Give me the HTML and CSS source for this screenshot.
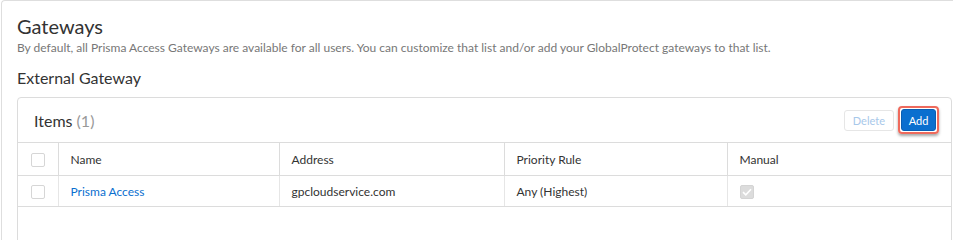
FILE: index.html
```html
<!DOCTYPE html>
<html>
<head>
<meta charset="utf-8">
<link rel="stylesheet" href="styles.css">
</head>
<body>
<div class="page">
  <h1 class="title">Gateways</h1>
  <p class="desc">By default, all Prisma Access Gateways are available for all users. You can customize that list and/or add your GlobalProtect gateways to that list.</p>
  <h2 class="section">External Gateway</h2>
  <div class="card">
    <div class="card-head">
      <div class="items">Items <span class="count">(1)</span></div>
      <div class="actions">
        <button class="btn btn-delete">Delete</button>
        <span class="highlight"><button class="btn btn-add">Add</button></span>
      </div>
    </div>
    <table class="grid">
      <colgroup>
        <col class="c-check">
        <col class="c-name">
        <col class="c-addr">
        <col class="c-prio">
        <col>
      </colgroup>
      <thead>
        <tr>
          <th class="chk"><span class="box"></span></th>
          <th>Name</th>
          <th>Address</th>
          <th>Priority Rule</th>
          <th>Manual</th>
        </tr>
      </thead>
      <tbody>
        <tr>
          <td class="chk"><span class="box"></span></td>
          <td><a class="link">Prisma Access</a></td>
          <td>gpcloudservice.com</td>
          <td>Any (Highest)</td>
          <td><span class="box checked"><svg width="10" height="8" viewBox="0 0 10 8"><path d="M1 4.2 L3.8 6.8 L9 1.2" fill="none" stroke="#fff" stroke-width="1.6"/></svg></span></td>
        </tr>
      </tbody>
    </table>
  </div>
</div>
</body>
</html>
```

FILE: styles.css
```css
html, body {
  margin: 0;
  padding: 0;
  background: #fff;
  overflow: hidden;
}
body {
  font-family: Lato, "Open Sans", sans-serif;
  color: #333;
}
.page {
  margin-left: 1px;
  border: 1px solid #dedede;
  border-right: none;
  border-bottom: none;
  border-radius: 4px 0 0 0;
  padding: 12px 0 0 15px;
  height: 227px;
}
.title {
  margin: 0;
  font-size: 20px;
  font-weight: 400;
  line-height: 26px;
  color: #333;
}
.desc {
  margin: 1px 0 0;
  font-size: 12px;
  line-height: 16px;
  color: #777;
}
.section {
  margin: 12px 0 0;
  font-size: 16px;
  font-weight: 400;
  line-height: 20px;
  color: #333;
}
.card {
  margin-top: 9px;
  border: 1px solid #dcdcdc;
  border-radius: 4px;
  height: 200px;
  width: 933px;
}
.card-head {
  height: 44px;
  display: flex;
  align-items: center;
  justify-content: space-between;
  padding: 0 12px 0 16px;
  border-bottom: 1px solid #dcdcdc;
}
.items {
  font-size: 16px;
  color: #333;
}
.count {
  color: #999;
}
.actions {
  display: flex;
  align-items: center;
  gap: 4px;
}
.btn {
  font-family: Lato, sans-serif;
  font-size: 11px;
  height: 21px;
  border-radius: 3px;
  padding: 0 8px;
  cursor: default;
}
.btn-delete {
  background: #fff;
  border: 1px solid #e6e6e6;
  color: #a8c8ea;
  margin-top: 1px;
}
.highlight {
  display: inline-flex;
  padding: 1px;
  border: 2px solid #ef6a5c;
  border-radius: 4px;
  box-shadow: 0 2px 3px rgba(0,0,0,0.35);
}
.btn-add {
  background: #0a6fcf;
  border: 1px solid #0a5fb3;
  color: #fff;
  height: 22px;
  width: 35px;
  padding: 0;
  font-size: 11px;
}
.grid {
  width: 100%;
  border-collapse: collapse;
  table-layout: fixed;
  font-size: 12px;
}
.c-check { width: 40px; }
.c-name { width: 221px; }
.c-addr { width: 225px; }
.c-prio { width: 223px; }
.grid th, .grid td {
  text-align: left;
  font-weight: 400;
  padding: 0 12px;
  border-bottom: 1px solid #dcdcdc;
  color: #333;
}
.grid th {
  height: 32px;
  border-left: 1px solid #dcdcdc;
}
.grid td {
  height: 30px;
  border-left: 1px solid #e6e6e6;
}
.grid th:first-child, .grid td:first-child {
  border-left: none;
}
.grid .chk {
  padding: 0 0 0 13px;
}
.box {
  display: inline-flex;
  align-items: center;
  justify-content: center;
  width: 12px;
  height: 12px;
  border: 1px solid #d6d6d6;
  border-radius: 2px;
  vertical-align: middle;
  background: #fff;
}
.box.checked {
  background: #dcdcdc;
  border-color: #d4d4d4;
}
.link {
  color: #0a6fcf;
}
```
